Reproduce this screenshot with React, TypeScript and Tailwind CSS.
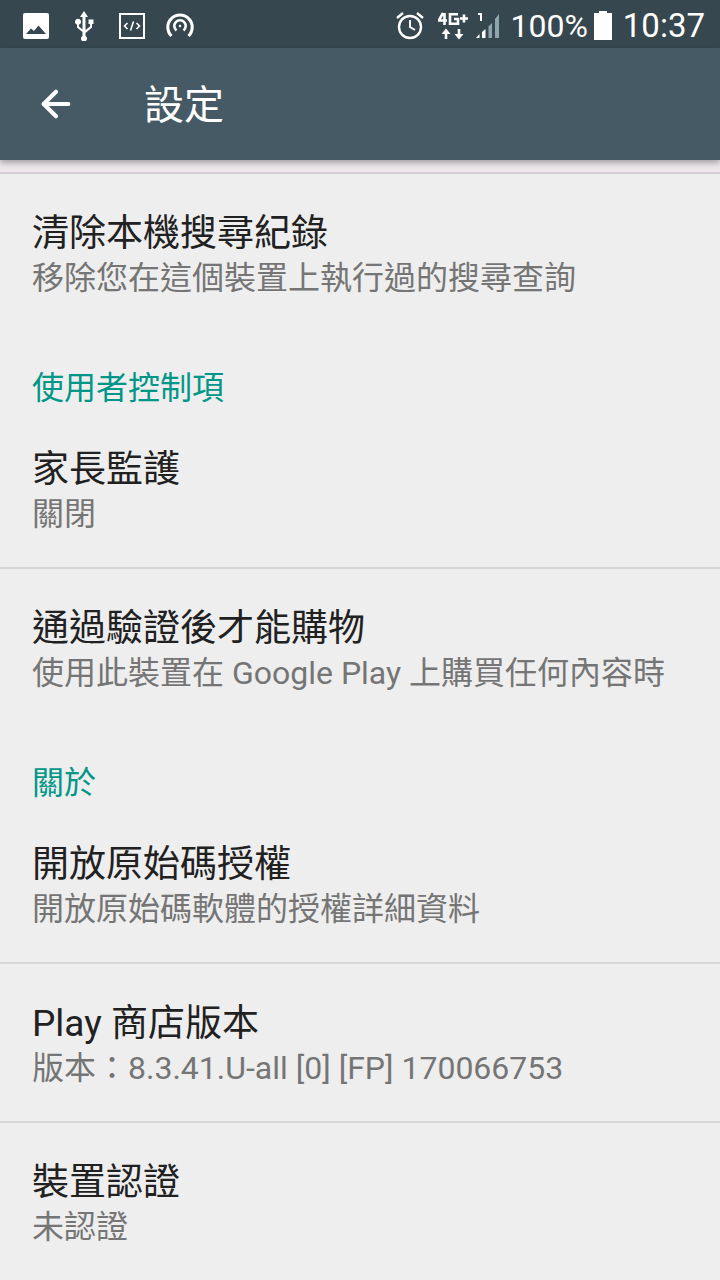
import { ArrowLeft } from 'lucide-react';

const fontStack = { fontFamily: '"Roboto", "Noto Sans CJK TC", sans-serif' };

function StatusIcons() {
  return (
    <div className="flex items-center pt-[3px]">
      {/* photo */}
      <svg width="26" height="26" viewBox="0 0 26 26" className="ml-[23px]">
        <rect x="0" y="0" width="26" height="26" rx="2" fill="#fff" />
        <path d="M3 21 L8 15.5 L11 18 L15.5 12.5 L23 21 Z" fill="#37474f" />
      </svg>
      {/* usb */}
      <svg width="22" height="30" viewBox="0 0 22 30" className="ml-[24px]" fill="#fff">
        <path d="M11 0 L15 6 H12.5 V19 L17 15.5 V13 H15.5 V8.5 H20.5 V13 H19 V16.5 L12.5 22 V25 A3 3 0 1 1 9.5 25 V21 L4 16.5 V13.6 A3 3 0 1 1 6 13.6 V15.5 L9.5 18.5 V6 H7 Z" />
      </svg>
      {/* code box */}
      <svg width="26" height="26" viewBox="0 0 26 26" className="ml-[24px]" fill="none" stroke="#fff">
        <rect x="1" y="1" width="24" height="24" strokeWidth="2" />
        <path d="M8.5 10 L5.5 13 L8.5 16 M17.5 10 L20.5 13 L17.5 16 M14.5 8.5 L11.5 17.5" strokeWidth="1.6" />
      </svg>
      {/* hotspot */}
      <svg width="30" height="28" viewBox="0 0 30 28" className="ml-[20px]" fill="none" stroke="#fff">
        <circle cx="15" cy="14" r="1.2" fill="#fff" stroke="none" />
        <path d="M11.5 18.5 A5.7 5.7 0 1 1 18.5 18.5" strokeWidth="2.6" />
        <path d="M6.5 24 A12.2 12.2 0 1 1 23.5 24" strokeWidth="3" />
      </svg>
    </div>
  );
}

function StatusRight() {
  return (
    <div className="flex items-center pt-[3px]">
      {/* alarm */}
      <svg width="30" height="30" viewBox="0 0 30 30" fill="none" stroke="#fff" strokeWidth="2.4">
        <circle cx="15" cy="16" r="11" />
        <path d="M15 9 V16 L20 19" strokeWidth="2" />
        <path d="M2 7 L8 2 M28 7 L22 2" />
      </svg>
      {/* 4G+ */}
      <svg width="31" height="28" viewBox="0 0 31 28" className="ml-[13px]">
        <g fill="none" stroke="#fff" strokeWidth="2.6">
          <path d="M5 1 L1.3 7.5 V8.5 H9 M6.5 1 V13" />
          <path d="M20 2.3 H12 V11.7 H20 V7 H16" />
          <path d="M22 6.5 H30 M26 2.5 V10.5" />
          <path d="M8 27 V21 M21 17 V23" />
        </g>
        <path d="M8 16.5 L12.5 22 H3.5 Z M21 27.5 L16.5 22 H25.5 Z" fill="#fff" />
      </svg>
      {/* signal */}
      <svg width="26" height="28" viewBox="0 0 26 28" className="ml-[6px]">
        <path d="M3 1 H7 V9 H5 V3 H3 Z" fill="#fff" />
        <path d="M1 26 L4.5 22 V26 Z" fill="#fff" />
        <path d="M7 26 V20 L10.5 17 V26 Z" fill="#fff" />
        <path d="M13.5 26 V14.5 L17 11 V26 Z" fill="#90a4ae" />
        <path d="M20 26 V7 L24 2 V26 Z" fill="#90a4ae" />
      </svg>
      <span className="ml-[9px] text-[32px] leading-none text-white">100%</span>
      {/* battery */}
      <svg width="20" height="29" viewBox="0 0 20 29" className="ml-[5px]" fill="#fff">
        <path d="M6 0 H14 V2 H19 V29 H1 V2 H6 Z" />
      </svg>
      <span className="ml-[10px] text-[33px] leading-none text-white">10:37</span>
    </div>
  );
}

function SectionHeader({ label }: { label: string }) {
  return <div className="px-[32px] pt-[67px] pb-[39px] text-[32px] leading-[40px] text-[#009688]">{label}</div>;
}

function Row({ title, subtitle, className }: { title: string; subtitle: string; className?: string }) {
  return (
    <div className={`px-[32px] ${className ?? ''}`}>
      <div className="text-[37px] leading-[45px] text-[#212121]">{title}</div>
      <div className="text-[32px] leading-[45px] text-[#757575]">{subtitle}</div>
    </div>
  );
}

function Divider() {
  return <div className="h-[2px] shrink-0 bg-[#d6d6d6]" />;
}

export default function App() {
  return (
    <div className="flex h-[1280px] w-[720px] flex-col overflow-hidden bg-[#eeeeee]" style={fontStack}>
      <div className="flex h-[48px] shrink-0 items-center justify-between bg-[#37474f] pr-[15px]">
        <StatusIcons />
        <StatusRight />
      </div>
      <div className="relative z-10 flex h-[112px] shrink-0 items-center bg-[#455a64] shadow-[0_3px_6px_rgba(0,0,0,0.3)]">
        <ArrowLeft className="ml-[35px] h-[42px] w-[42px] text-white" strokeWidth={2.4} absoluteStrokeWidth />
        <span className="ml-[67px] pt-[4px] text-[40px] leading-none text-white">設定</span>
      </div>
      <div className="h-[12px] shrink-0 bg-[#ece8ec]" />
      <div className="h-[2px] shrink-0 bg-[#d6ced6]" />
      <Row className="pt-[37px]" title="清除本機搜尋紀錄" subtitle="移除您在這個裝置上執行過的搜尋查詢" />
      <SectionHeader label="使用者控制項" />
      <Row className="pb-[30px]" title="家長監護" subtitle="關閉" />
      <Divider />
      <Row className="pt-[37px]" title="通過驗證後才能購物" subtitle="使用此裝置在 Google Play 上購買任何內容時" />
      <SectionHeader label="關於" />
      <Row className="pb-[30px]" title="開放原始碼授權" subtitle="開放原始碼軟體的授權詳細資料" />
      <Divider />
      <Row className="pt-[37px] pb-[30px]" title="Play 商店版本" subtitle="版本：8.3.41.U-all [0] [FP] 170066753" />
      <Divider />
      <Row className="pt-[37px]" title="裝置認證" subtitle="未認證" />
    </div>
  );
}
